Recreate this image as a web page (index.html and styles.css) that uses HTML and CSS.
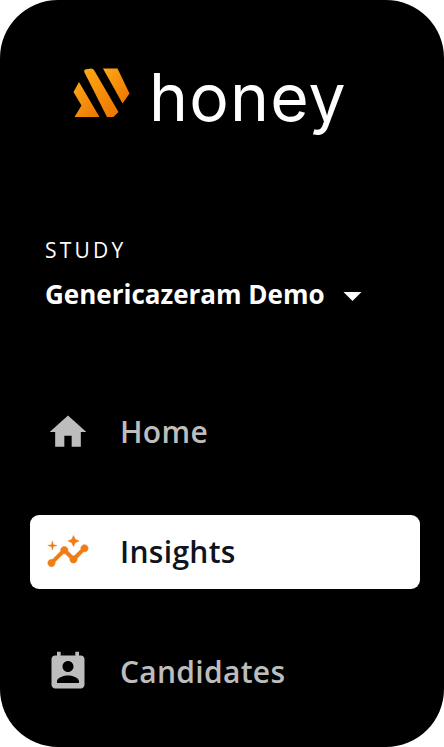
FILE: index.html
```html
<!DOCTYPE html>
<html lang="en">
<head>
<meta charset="utf-8">
<title>Honey</title>
<link rel="stylesheet" href="styles.css">
</head>
<body>
<aside class="sidebar">
  <div class="brand">
    <svg class="brand-mark" viewBox="0 0 60 52" aria-hidden="true">
      <defs>
        <linearGradient id="hg" x1="0" y1="0" x2="1" y2="1">
          <stop offset="0" stop-color="#ffa915"/>
          <stop offset="1" stop-color="#ec7300"/>
        </linearGradient>
      </defs>
      <path fill="url(#hg)" d="M7 15 27.500 50 2.500 50 9.500 38.500 1.500 25Z"/>
      <path fill="url(#hg)" d="M12.500 5.500Q11.500 3.500 13 2.500L19 1.500Q21 1.500 22 3L46.500 45 41.500 50 35 50Z"/>
      <path fill="url(#hg)" d="M31 1.500 45.500 1.500 57.500 26.500 50.500 36.500Z"/>
    </svg>
    <span class="brand-name">honey</span>
  </div>
  <div class="study">
    <div class="study-label">STUDY</div>
    <div class="study-select">
      <span class="study-name">Genericazeram Demo</span>
      <svg class="caret" viewBox="0 0 18 9" aria-hidden="true"><path d="M0 0h18L9 9z"/></svg>
    </div>
  </div>
  <nav class="nav">
    <a class="nav-item">
      <svg class="nav-icon" viewBox="0 0 24 24" aria-hidden="true"><path d="M10 20v-6h4v6h5v-8h3L12 3 2 12h3v8z"/></svg>
      <span class="nav-label">Home</span>
    </a>
    <a class="nav-item active">
      <svg class="nav-icon" viewBox="0 0 24 24" aria-hidden="true"><path d="M21 8c-1.450 0-2.260 1.440-1.930 2.510l-3.550 3.560c-.3-.09-.74-.09-1.040 0l-2.550-2.550C12.270 10.450 11.460 9 10 9c-1.450 0-2.270 1.440-1.930 2.520l-4.560 4.550C2.440 15.740 1 16.550 1 18c0 1.100.9 2 2 2 1.450 0 2.260-1.440 1.930-2.510l4.550-4.560c.3.09.74.09 1.040 0l2.550 2.550C12.730 16.550 13.540 18 15 18c1.450 0 2.270-1.440 1.930-2.520l3.560-3.550c1.070.33 2.510-.48 2.510-1.930 0-1.100-.9-2-2-2z"/><path d="m15 9 .94-2.070L18 6l-2.060-.93L15 3l-.92 2.070L12 6l2.080.93zM3.500 11 4 9l2-.5L4 8l-.5-2L3 8l-2 .5L3 9z"/></svg>
      <span class="nav-label">Insights</span>
    </a>
    <a class="nav-item">
      <svg class="nav-icon" viewBox="0 0 24 24" aria-hidden="true"><path d="M19 3h-1V1h-2v2H8V1H6v2H5c-1.110 0-2 .9-2 2v14c0 1.100.89 2 2 2h14c1.100 0 2-.9 2-2V5c0-1.100-.9-2-2-2zm-7 3c1.660 0 3 1.340 3 3s-1.340 3-3 3-3-1.340-3-3 1.340-3 3-3zm6 12H6v-1c0-2 4-3.100 6-3.100s6 1.100 6 3.100v1z"/></svg>
      <span class="nav-label">Candidates</span>
    </a>
  </nav>
</aside>
</body>
</html>
```
FILE: styles.css
```css
html, body {
  margin: 0;
  padding: 0;
  background: #fff;
}

.sidebar {
  box-sizing: border-box;
  width: 444px;
  height: 747px;
  background: #000;
  border-radius: 58px;
  overflow: hidden;
  font-family: "Open Sans", sans-serif;
  padding: 67px 24px 0 30px;
}

.brand {
  display: flex;
  align-items: flex-start;
  gap: 17px;
  height: 64px;
  padding-left: 42px;
}

.brand-mark {
  width: 60px;
  height: 52px;
  flex: none;
}

.brand-name {
  font-family: Inter, sans-serif;
  font-weight: 400;
  font-size: 66px;
  line-height: 60px;
  color: #fff;
  letter-spacing: 1.2px;
}

.study {
  padding: 105px 0 0 15px;
}

.study-label {
  font-size: 21px;
  line-height: 28px;
  letter-spacing: 3.2px;
  color: #fff;
}

.study-select {
  display: flex;
  align-items: center;
  gap: 18px;
  margin-top: 13px;
}

.study-name {
  font-size: 26px;
  line-height: 35px;
  font-weight: 700;
  color: #fff;
}

.caret {
  width: 19px;
  height: 9px;
  fill: #fff;
  margin-top: 4px;
}

.nav {
  display: flex;
  flex-direction: column;
  gap: 46px;
  margin-top: 83px;
}

.nav-item {
  display: flex;
  align-items: center;
  gap: 30px;
  height: 74px;
  padding-left: 16px;
  border-radius: 9px;
  font-size: 30px;
  font-weight: 600;
  letter-spacing: 0.3px;
  color: #bdbdbd;
  fill: #bdbdbd;
}

.nav-label {
  margin-bottom: 2px;
}

.nav-item.active {
  background: #fff;
  color: #0d1420;
  fill: #f07c16;
  stroke: #f07c16;
  stroke-width: 0.3;
}

.nav-icon {
  width: 44px;
  height: 44px;
  flex: none;
}
```
